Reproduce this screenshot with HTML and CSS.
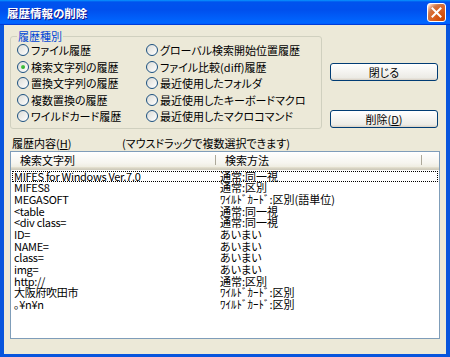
FILE: index.html
```html
<!DOCTYPE html>
<html lang="ja">
<head>
<meta charset="utf-8">
<title>履歴情報の削除</title>
<link rel="stylesheet" href="styles.css">
</head>
<body>
<div class="window">
  <div class="titlebar">
    <span class="title">履歴情報の削除</span>
    <button class="close" aria-label="閉じる"><svg width="11" height="11" viewBox="0 0 11 11"><path d="M1.5 1.5 L9.5 9.5 M9.5 1.5 L1.5 9.5" stroke="#fff" stroke-width="2" stroke-linecap="square"/></svg></button>
  </div>
  <div class="frame">
    <div class="top">
      <fieldset class="group">
        <legend>履歴種別</legend>
        <div class="radios">
          <label class="radio"><span class="dot"></span>ファイル履歴</label>
          <label class="radio checked"><span class="dot"></span>検索文字列の履歴</label>
          <label class="radio"><span class="dot"></span>置換文字列の履歴</label>
          <label class="radio"><span class="dot"></span>複数置換の履歴</label>
          <label class="radio"><span class="dot"></span>ワイルドカード履歴</label>
          <label class="radio"><span class="dot"></span>グローバル検索開始位置履歴</label>
          <label class="radio"><span class="dot"></span>ファイル比較(diff)履歴</label>
          <label class="radio"><span class="dot"></span>最近使用したフォルダ</label>
          <label class="radio"><span class="dot"></span>最近使用したキーボードマクロ</label>
          <label class="radio"><span class="dot"></span>最近使用したマクロコマンド</label>
        </div>
      </fieldset>
      <div class="buttons">
        <button class="btn">閉じる</button>
        <button class="btn">削除(<u>D</u>)</button>
      </div>
    </div>
    <div class="labels"><span>履歴内容(<u>H</u>)</span><span>(マウスドラッグで複数選択できます)</span></div>
    <div class="list">
      <div class="header">
        <div class="hcell h1">検索文字列</div>
        <div class="hcell h2">検索方法</div>
        <div class="hcell hrest"></div>
      </div>
      <div class="rows">
        <div class="row focus"><span class="c1">MIFES for Windows Ver.7.0</span><span class="c2">通常:同一視</span></div>
        <div class="row"><span class="c1">MIFES8</span><span class="c2">通常:区別</span></div>
        <div class="row"><span class="c1">MEGASOFT</span><span class="c2">ﾜｲﾙﾄﾞｶｰﾄﾞ:区別(語単位)</span></div>
        <div class="row"><span class="c1">&lt;table</span><span class="c2">通常:同一視</span></div>
        <div class="row"><span class="c1">&lt;div class=</span><span class="c2">通常:同一視</span></div>
        <div class="row"><span class="c1">ID=</span><span class="c2">あいまい</span></div>
        <div class="row"><span class="c1">NAME=</span><span class="c2">あいまい</span></div>
        <div class="row"><span class="c1">class=</span><span class="c2">あいまい</span></div>
        <div class="row"><span class="c1">img=</span><span class="c2">あいまい</span></div>
        <div class="row"><span class="c1">http://</span><span class="c2">通常:区別</span></div>
        <div class="row"><span class="c1">大阪府吹田市</span><span class="c2">ﾜｲﾙﾄﾞｶｰﾄﾞ:区別</span></div>
        <div class="row"><span class="c1">｡¥n¥n</span><span class="c2">ﾜｲﾙﾄﾞｶｰﾄﾞ:区別</span></div>
      </div>
    </div>
  </div>
</div>
</body>
</html>
```
FILE: styles.css
```css
* { box-sizing: border-box; }
html, body { margin: 0; padding: 0; }
body {
  width: 450px;
  height: 357px;
  overflow: hidden;
  font-family: "Noto Sans CJK JP", "Noto Sans", sans-serif;
  font-size: 11px;
  font-feature-settings: "palt";
  color: #000;
  background: #fff;
}
.window {
  width: 450px;
  height: 357px;
  display: flex;
  flex-direction: column;
  background: #0855DD;
}
.titlebar {
  height: 25px;
  flex: none;
  display: flex;
  align-items: center;
  justify-content: space-between;
  padding: 0 4px 0 7px;
  background: linear-gradient(180deg, #0997ff, #0053ee 8%, #0050ee 40%, #0066ff 88%, #0066ff 93%, #005bff 95%, #003dd7 96%, #003dd7);
}
.title {
  color: #fff;
  font-weight: bold;
  font-size: 11.5px;
  line-height: 14px;
  text-shadow: 1px 1px #0f1089;
}
.close {
  width: 19px;
  height: 19px;
  padding: 0;
  border: 1px solid #fff;
  border-radius: 3px;
  background: radial-gradient(circle at 90% 90%, #cc4600 0%, #dc6527 55%, #cd7546 70%, #ffccb2 90%, #fff 100%);
  display: flex;
  align-items: center;
  justify-content: center;
}
.frame {
  flex: 1;
  background: #ECE9D8;
  border-style: solid;
  border-color: #0855DD;
  border-width: 0 4px 3px 4px;
  padding: 5px 6px 0 6px;
  display: flex;
  flex-direction: column;
}
.top {
  display: flex;
  align-items: flex-start;
  gap: 8px;
}
.group {
  width: 312px;
  margin: 0;
  padding: 0 4px 3px 6px;
  border: 1px solid #D0D0BF;
  border-radius: 3px;
}
.group legend {
  padding: 0 1px;
  color: #0046D5;
  line-height: 12px;
}
.radios {
  display: grid;
  grid-template-columns: 129px auto;
  grid-template-rows: repeat(5, 16.5px);
  grid-auto-flow: column;
}
.radio {
  display: flex;
  align-items: center;
  white-space: nowrap;
  line-height: 12px;
}
.dot {
  width: 12px;
  height: 12px;
  flex: none;
  margin-right: 2px;
  border-radius: 50%;
  border: 1px solid #1C5180;
  background: linear-gradient(135deg, #DCDCD7, #fff);
  display: flex;
  align-items: center;
  justify-content: center;
}
.checked .dot::after {
  content: "";
  width: 4px;
  height: 4px;
  border-radius: 50%;
  background: linear-gradient(135deg, #55D551, #21A121);
}
.buttons {
  width: 108px;
  display: flex;
  flex-direction: column;
  gap: 29px;
  padding-top: 33px;
}
.btn {
  height: 18px;
  padding: 0;
  font: inherit;
  line-height: 14px;
  color: #000;
  border: 1px solid #003C74;
  border-radius: 3px;
  background: linear-gradient(180deg, #fff, #ecebe5 86%, #d8d0c4);
}
.labels {
  margin-top: 8px;
  display: grid;
  grid-template-columns: 110px auto;
  padding-left: 2px;
  line-height: 12px;
  white-space: nowrap;
}
.list {
  margin-top: 2px;
  width: 430px;
  height: 188px;
  border: 1px solid #7F9DB9;
  background: #fff;
  display: flex;
  flex-direction: column;
}
.header {
  height: 18px;
  flex: none;
  display: flex;
  background: linear-gradient(180deg, #fff, #F6F5EF 60%, #EFEDE2 82%, #E2DECD 86%, #D6D2C2 92%, #CBC7B8);
}
.hcell {
  line-height: 16px;
  padding-left: 9px;
  white-space: nowrap;
  background: linear-gradient(#ACA899, #ACA899) no-repeat right 0 top 3px / 1px 10px;
}
.h1 { width: 205px; }
.h2 { width: 206px; }
.hrest { flex: 1; background: none; }
.rows {
  padding-top: 1px;
}
.row {
  display: flex;
  height: 11.7px;
  margin: 0 1px;
  border: 1px solid transparent;
  white-space: nowrap;
}
.row span { line-height: 9.7px; }
.row.focus { border: 1px dotted #000; }
.c1 { width: 203px; padding-left: 1px; letter-spacing: -0.3px; }
.c2 { padding-left: 4px; }
```
